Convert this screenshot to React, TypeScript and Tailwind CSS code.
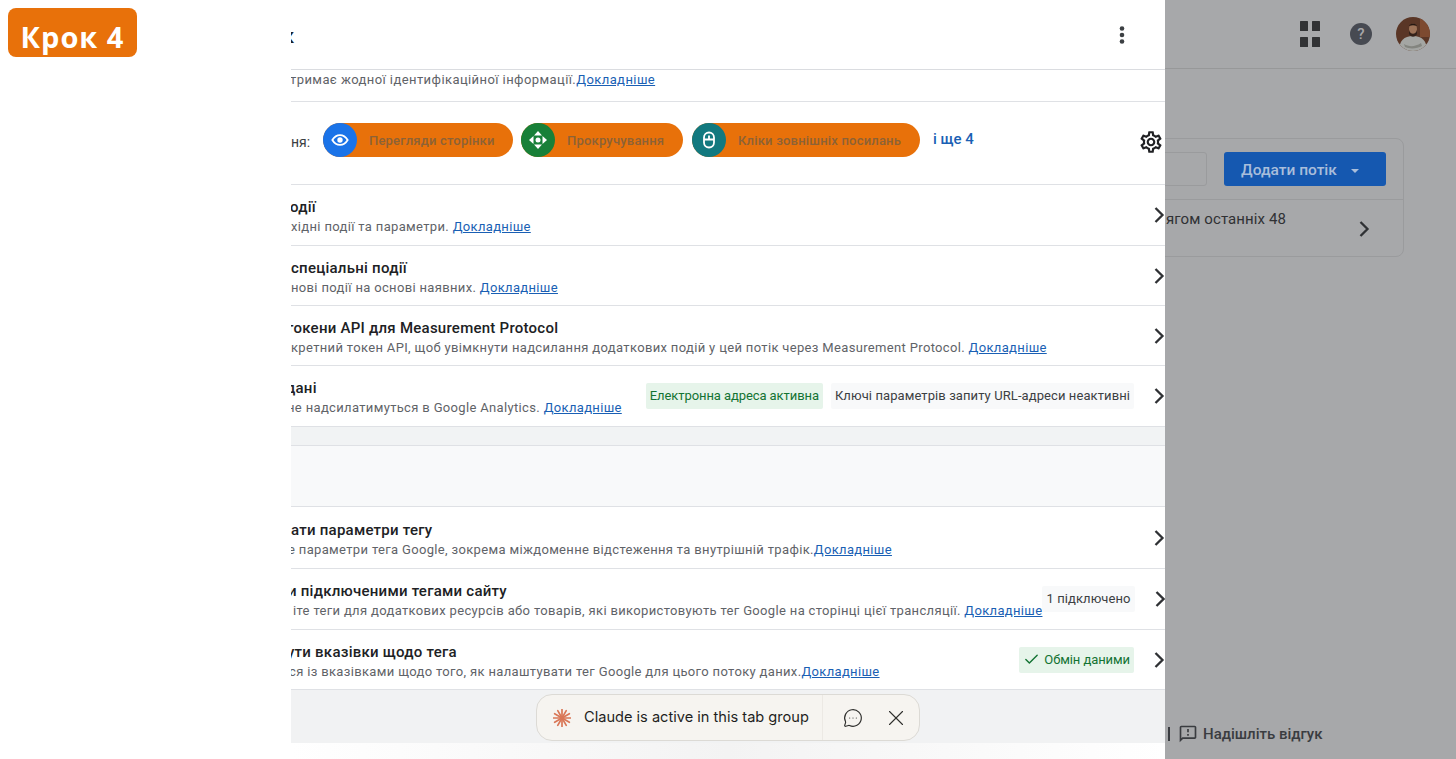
import type { ReactNode } from 'react'
import { Check, MessageCircleMore, X } from 'lucide-react'
import { MdOutlineFeedback, MdOutlineSettings } from 'react-icons/md'

// Спільний стиль посилань
function More() {
  return <a className="text-[#1a5fb4] underline">Докладніше</a>
}

function Chevron() {
  return (
    <svg width="12" height="16" viewBox="0 0 12 16" className="shrink-0">
      <path d="M2.500 1 9.500 8 2.500 15" fill="none" stroke="#2f3134" strokeWidth="2.300" />
    </svg>
  )
}

function EyeIcon() {
  return (
    <svg width="18" height="18" viewBox="0 0 20 20">
      <path d="M1.500 10C4 5.800 7 4.500 10 4.500s6 1.300 8.500 5.500c-2.500 4.200-5.500 5.500-8.500 5.500S4 14.200 1.500 10Z" fill="none" stroke="#fff" strokeWidth="2" />
      <circle cx="10" cy="10" r="3" fill="#fff" />
    </svg>
  )
}

function ScrollIcon() {
  return (
    <svg width="20" height="20" viewBox="0 0 20 20" fill="#fff">
      <path d="M10 1 14 5.500H6ZM10 19 6 14.500h8ZM1 10 5.500 6v8ZM19 10 14.500 14V6Z" />
      <circle cx="10" cy="10" r="2.500" />
    </svg>
  )
}

function MouseIcon() {
  return (
    <svg width="20" height="20" viewBox="0 0 20 20" fill="none" stroke="#fff" strokeWidth="1.800">
      <rect x="5" y="2.500" width="10" height="15" rx="5" />
      <path d="M5 9.500h10M10 5.500v3" />
    </svg>
  )
}

function Chip({ icon, color, label, width }: { icon: ReactNode; color: string; label: string; width: string }) {
  return (
    <div className={`flex h-[34px] items-center rounded-full bg-[#e8710a] ${width}`}>
      <span className={`flex h-[34px] w-[34px] items-center justify-center rounded-full ${color}`}>{icon}</span>
      <span className="ml-[12px] mt-[1px] whitespace-nowrap text-[13px] font-medium tracking-[0.2px] text-[#8c6236]">{label}</span>
    </div>
  )
}

function Row({
  title,
  desc,
  link = true,
  height,
  right,
  titleClass = '',
  descClass = '',
}: {
  title: string
  desc: string
  link?: boolean
  height: string
  right?: ReactNode
  titleClass?: string
  descClass?: string
}) {
  return (
    <div className={`flex items-center justify-between border-b border-[#dfe1e5] ${height}`}>
      <div className="flex flex-col pt-[3px]">
        <span className={`mb-[1px] whitespace-nowrap text-[15px] leading-[20px] font-medium tracking-[0.25px] text-[#202124] ${titleClass}`}>{title}</span>
        <span className={`whitespace-nowrap text-[13px] leading-[18px] tracking-[0.34px] text-[#5f6368] ${descClass}`}>
          {desc}
          {link && <More />}
        </span>
      </div>
      <div className="flex items-center">
        {right}
        <span className="ml-[19px] flex">
          <Chevron />
        </span>
      </div>
    </div>
  )
}

function Badge({ tone, children }: { tone: 'green' | 'gray'; children: ReactNode }) {
  return (
    <span
      className={`flex h-[26px] items-center gap-1 whitespace-nowrap rounded-[2px] px-[4px] text-[13px] ${
        tone === 'green' ? 'bg-[#e6f4ea] tracking-[-0.08px] text-[#137333]' : 'bg-[#f8f9fa] tracking-[0.09px] text-[#3c4043]'
      }`}
    >
      {children}
    </span>
  )
}

function StarMark() {
  const angles = [0, 30, 60, 90, 120, 150, 180, 210, 240, 270, 300, 330]
  return (
    <svg width="18" height="18" viewBox="0 0 18 18" className="shrink-0">
      {angles.map((a) => (
        <line key={a} x1="9" y1="9" x2="9" y2="0.500" stroke="#d97757" strokeWidth="1.700" strokeLinecap="round" transform={`rotate(${a} 9 9)`} />
      ))}
    </svg>
  )
}

function ClaudePill() {
  return (
    <div className="absolute left-[245px] top-[694px] flex h-[47px] w-[384px] items-center rounded-[16px] border border-[#dcdad5] bg-[#f6f4f0] pl-[16px] font-['Inter',sans-serif]">
      <StarMark />
      <span className="ml-[13px] mt-[1px] w-[226px] whitespace-nowrap text-[14.6px] text-[#1f1f1e]">Claude is active in this tab group</span>
      <div className="ml-[12px] flex h-full items-center border-l border-[#ece9e4] pl-[20px]">
        <MessageCircleMore size={20} strokeWidth={1.400} className="text-[#2f2f2d]" />
        <X size={26} strokeWidth={1} className="ml-[20px] text-[#2f2f2d]" />
      </div>
    </div>
  )
}

function Avatar() {
  return (
    <svg width="34" height="34" viewBox="0 0 34 34" className="rounded-full">
      <rect width="34" height="34" fill="#5a3626" />
      <rect x="24" width="10" height="20" fill="#7d4a30" />
      <path d="M3 34c0-10 5-15 14-15s14 5 14 15Z" fill="#a4a6a3" />
      <path d="M8 27c5 3 11 3 17-1l1 3c-5 3-13 3-17 1Z" fill="#83857f" />
      <ellipse cx="17" cy="12" rx="4" ry="5.500" fill="#9c7257" />
      <path d="M13 13c1 5 7 5 8 0v4c-2 3.500-6 3.500-8 0Z" fill="#33221a" />
      <path d="M13 9c1-3.500 7-3.500 8 0-3-1-5-1-8 0Z" fill="#261812" />
    </svg>
  )
}

export default function App() {
  return (
    <div className="flex h-[759px] w-[1456px] overflow-hidden bg-white font-['Roboto',sans-serif]">
      <div className="w-[291px] shrink-0 pl-[8px] pt-[8px]">
        <div className="flex h-[49px] w-[129px] items-center justify-center rounded-[8px] bg-[#e8710a] pt-[8px] font-['Open_Sans',sans-serif] text-[29px] font-bold tracking-[1px] text-white">
          Крок 4
        </div>
      </div>

      <div className="relative flex w-[874px] shrink-0 flex-col overflow-hidden">
        {/* Шапка панелі */}
        <div className="flex h-[70px] shrink-0 items-center justify-between border-b border-[#dadce0] pr-[40px]">
          <span className="-ml-[8px] pt-[2px] text-[20px] font-medium text-[#202124]">к</span>
          <svg width="6" height="20" viewBox="0 0 6 20" fill="#3c4043">
            <circle cx="3" cy="3.500" r="2.300" />
            <circle cx="3" cy="10" r="2.300" />
            <circle cx="3" cy="16.500" r="2.300" />
          </svg>
        </div>
        <div className="flex h-[32px] shrink-0 items-start border-b border-[#dfe1e5] pt-[1px] text-[13px] leading-[18px] tracking-[0.42px] text-[#5f6368]">
          <span className="-ml-[1px] whitespace-nowrap">
            тримає жодної ідентифікаційної інформації.
            <More />
          </span>
        </div>

        {/* Показники */}
        <div className="flex h-[83px] shrink-0 items-start justify-between border-b border-[#dfe1e5] pr-[1px] pt-[21px]">
          <div className="flex items-center">
            <span className="w-[32px] pt-[4px] text-[14px] text-[#3c4043]">ня:</span>
            <Chip icon={<EyeIcon />} color="bg-[#1a73e8]" label="Перегляди сторінки" width="w-[190px]" />
            <div className="w-[8px]" />
            <Chip icon={<ScrollIcon />} color="bg-[#188038]" label="Прокручування" width="w-[162px]" />
            <div className="w-[9px]" />
            <Chip icon={<MouseIcon />} color="bg-[#12797f]" label="Кліки зовнішніх посилань" width="w-[228px]" />
            <span className="mb-[2px] ml-[13px] whitespace-nowrap text-[15px] font-medium text-[#1a5fb4]">і ще 4</span>
          </div>
          <MdOutlineSettings size={26} className="mt-[6px] text-[#202124]" />
        </div>

        <Row height="h-[61px]" title="одії" titleClass="-ml-[1px]" desc="хідні події та параметри. " />
        <Row height="h-[60px]" title="спеціальні події" desc="нові події на основі наявних. " />
        <Row height="h-[60px]" title="токени API для Measurement Protocol" titleClass="-ml-[5px]" desc="кретний токен API, щоб увімкнути надсилання додаткових подій у цей потік через Measurement Protocol. " />
        <Row
          height="h-[61px]"
          title="дані"
          titleClass="-ml-[5px]"
          desc="не надсилатимуться в Google Analytics. "
          descClass="-ml-[4px]"
          right={
            <div className="flex gap-[8px]">
              <Badge tone="green">Електронна адреса активна</Badge>
              <Badge tone="gray">Ключі параметрів запиту URL-адреси неактивні</Badge>
            </div>
          }
        />

        <div className="h-[19px] shrink-0 border-b border-[#dfe1e5] bg-[#f1f3f4]" />
        <div className="h-[61px] shrink-0 border-b border-[#dfe1e5] bg-[#f8f9fa]" />

        <Row height="h-[62px]" title="ати параметри тегу" desc="е параметри тега Google, зокрема міждоменне відстеження та внутрішній трафік." descClass="-ml-[3px]" />
        <Row
          height="h-[61px]"
          title="и підключеними тегами сайту"
          titleClass="-ml-[3px]"
          desc="іте теги для додаткових ресурсів або товарів, які використовують тег Google на сторінці цієї трансляції. "
          descClass="ml-[2px]"
          right={<Badge tone="gray">1 підключено</Badge>}
        />
        <Row
          height="h-[60px]"
          title="ути вказівки щодо тега"
          titleClass="-ml-[4px]"
          desc="ся із вказівками щодо того, як налаштувати тег Google для цього потоку даних."
          descClass="-ml-[2px]"
          right={
            <Badge tone="green">
              <Check size={17} strokeWidth={2} />
              Обмін даними
            </Badge>
          }
        />

        <div className="h-[53px] shrink-0 bg-[#f1f2f3]" />
        <div className="flex-1 bg-gradient-to-r from-white via-[#f3f3f3] to-white" />
        <ClaudePill />
      </div>

      {/* Затемнена сторінка за панеллю */}
      <div className="flex min-w-0 flex-1 flex-col overflow-hidden bg-[#a7a8aa]">
        <div className="flex h-[69px] shrink-0 items-center justify-end border-b border-[#979899] pr-[26px]">
          <svg width="20" height="26" viewBox="0 0 20 26" fill="#313234" className="mt-[-1px]">
            <rect width="8" height="10" rx="0.500" />
            <rect x="12" width="8" height="10" rx="0.500" />
            <rect y="16" width="8" height="10" rx="0.500" />
            <rect x="12" y="16" width="8" height="10" rx="0.500" />
          </svg>
          <span className="ml-[30px] flex h-[22px] w-[22px] items-center justify-center rounded-full bg-[#474a52] text-[15px] font-medium text-[#a7a8aa]">?</span>
          <span className="ml-[24px] flex">
            <Avatar />
          </span>
        </div>

        <div className="mr-[52px] mt-[69px] -ml-[10px] flex h-[119px] shrink-0 flex-col rounded-[8px] border border-[#9a9b9d]">
          <div className="flex h-[61px] shrink-0 items-center justify-end border-b border-[#9a9b9d] pr-[17px]">
            <div className="h-[34px] w-[48px] shrink-0 rounded-[3px] border border-[#9a9b9d]" />
            <button className="ml-[17px] flex h-[34px] w-[162px] shrink-0 items-center justify-center gap-[14px] rounded-[3px] bg-[#1558b0] pr-[10px] text-[15.500px] font-medium text-[#a9bedb]">
              <span className="pt-[3px]">Додати потік</span>
              <span className="mt-[3px] h-0 w-0 border-x-[4.500px] border-t-[4.500px] border-x-transparent border-t-[#a9bedb]" />
            </button>
          </div>
          <div className="flex flex-1 items-start justify-between pl-[10px] pr-[33px]">
            <span className="mt-[8px] whitespace-nowrap text-[15px] tracking-[0.1px] text-[#303134]">ягом останніх 48</span>
            <span className="mt-[21px] flex">
              <Chevron />
            </span>
          </div>
        </div>

        <div className="mb-[14px] mt-auto flex items-center whitespace-nowrap pl-[3px] text-[15px] font-medium text-[#3a3c40]">
          <span className="h-[14px] w-[2px] bg-[#3a3c40]" />
          <MdOutlineFeedback size={20} className="ml-[8px]" />
          <span className="ml-[5px]">Надішліть відгук</span>
        </div>
      </div>
    </div>
  )
}
